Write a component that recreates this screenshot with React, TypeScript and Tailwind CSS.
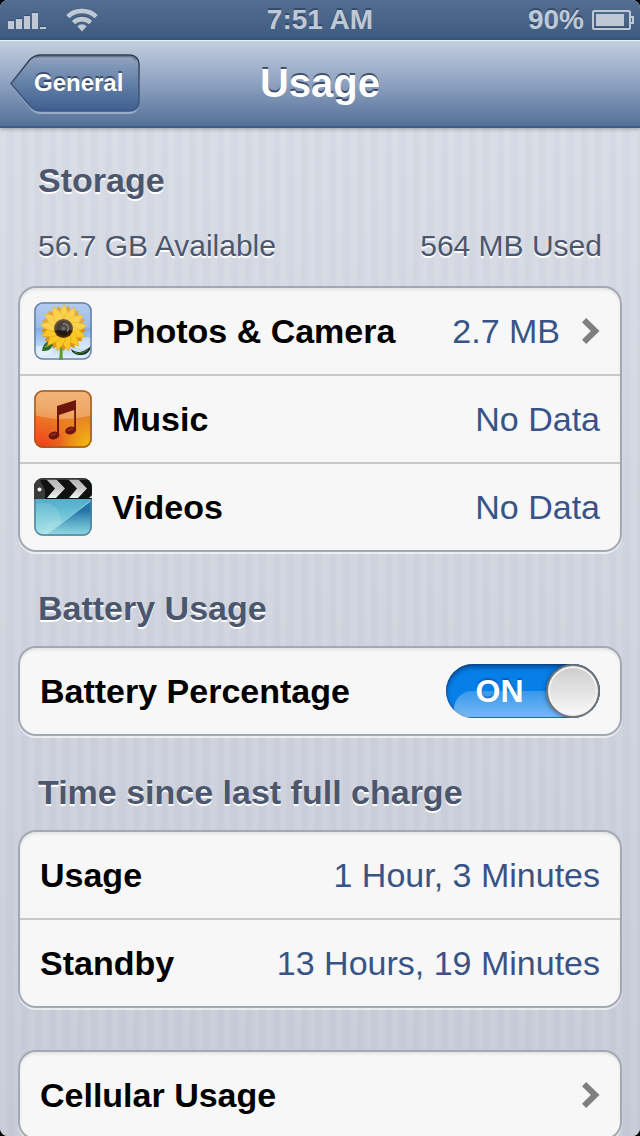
import { useId, useState, type ReactNode } from "react"

type StorageItem = { name: string; value: string; icon: ReactNode; href?: string }

const PETALS_BACK = Array.from({ length: 13 }, (_, i) => i * (360 / 13) + 12)
const PETALS_FRONT = Array.from({ length: 13 }, (_, i) => i * (360 / 13))

function SignalIcon() {
  return (
    <svg width="38" height="18" viewBox="0 0 38 18" aria-hidden="true">
      <path d="M0 9h6v2H0zM8 7h6v2H8zM16 4h6v2h-6zM24 1h6v2h-6zM32 15h6v2h-6z" fill="#2f4766" opacity=".7" />
      <path d="M0 10h6v8H0zM8 8h6v10H8zM16 5h6v13h-6zM24 2h6v16h-6zM32 16h6v2h-6z" fill="#bfc9d5" />
    </svg>
  )
}

function WifiIcon() {
  return (
    <svg width="32" height="24" viewBox="0 0 32 24" fill="none" aria-hidden="true">
      <g stroke="#2f4766" strokeWidth="4" opacity=".7" transform="translate(0 -1)">
        <path d="M1.8 8.6a20.5 20.5 0 0 1 28.4 0" />
        <path d="M7.4 14.2a12.4 12.4 0 0 1 17.2 0" />
      </g>
      <g stroke="#bfc9d5" strokeWidth="4.6">
        <path d="M1.8 8.6a20.5 20.5 0 0 1 28.4 0" />
        <path d="M7.4 14.6a12.4 12.4 0 0 1 17.2 0" />
      </g>
      <path d="M11.4 18.2a6.6 6.6 0 0 1 9.2 0L16 23.4z" fill="#bfc9d5" />
    </svg>
  )
}

function BatteryIcon() {
  return (
    <svg width="42" height="21" viewBox="0 0 42 21" fill="none" aria-hidden="true">
      <rect x="1" y="0" width="37" height="18" rx="1" stroke="#2f4766" strokeWidth="2" opacity=".6" />
      <rect x="1" y="1" width="37" height="18" rx="1" stroke="#bfc9d5" strokeWidth="2" />
      <rect x="4" y="4" width="28" height="12" fill="#bfc9d5" />
      <path d="M38 7h3v6h-3" stroke="#bfc9d5" strokeWidth="2" />
    </svg>
  )
}

function Chevron() {
  return (
    <svg width="18" height="26" viewBox="0 0 18 26" className="shrink-0" aria-hidden="true">
      <path d="M0 4.200 4.200 0 17.500 13 4.200 26 0 21.800 8.800 13z" fill="#7f7f7f" />
    </svg>
  )
}

function PhotosIcon() {
  return (
    <svg width="58" height="58" viewBox="0 0 58 58" aria-hidden="true">
      <defs>
        <linearGradient id="sky" x1="0" y1="0" x2="0" y2="1">
          <stop offset="0" stopColor="#a4c2ee" />
          <stop offset=".45" stopColor="#84ade6" />
          <stop offset=".75" stopColor="#b9d6f4" />
          <stop offset="1" stopColor="#e6f2fb" />
        </linearGradient>
        <radialGradient id="seeds">
          <stop offset="0" stopColor="#6a6058" />
          <stop offset=".35" stopColor="#1e1814" />
          <stop offset=".65" stopColor="#1e1712" />
          <stop offset="1" stopColor="#583408" />
        </radialGradient>
        <clipPath id="photosClip"><rect width="58" height="58" rx="9" /></clipPath>
      </defs>
      <g clipPath="url(#photosClip)">
        <rect width="58" height="58" fill="url(#sky)" />
        <ellipse cx="50" cy="41" rx="12" ry="6" fill="#fff" opacity=".4" />
        <ellipse cx="8" cy="49" rx="11" ry="5" fill="#fff" opacity=".4" />
        <path d="M25 40c1 7 1 12 0 18h4c-1-6 0-12 0-18z" fill="#5c9a2c" />
        <path d="M20 39c-6-1-11 2-12 10 6 0 9-1 10-5l3 2z" fill="#2d6b27" />
        <path d="M11 45c3-1 5-3 8-4" stroke="#8dbd58" strokeWidth="1.200" fill="none" />
        <path d="M37 47c5 4 11 5 20-3-1 6-5 9-10 9s-9-2-10-6z" fill="#12301a" />
        <path d="M40 50c5 2 9 1 14-2" stroke="#4f8c3c" strokeWidth="1" fill="none" />
        <g fill="#dc9410">
          {PETALS_BACK.map((deg) => (
            <path key={deg} d="M29.500 26c-7-6-6-14 .5-23 6.500 9 6 17-.5 23z" transform={`rotate(${deg} 29.5 26)`} />
          ))}
        </g>
        <g fill="#fbc926">
          {PETALS_FRONT.map((deg) => (
            <path key={deg} d="M29.500 26c-7-8-5-15 .5-23.500 5.500 8.500 6.500 15.500-.5 23.500z" stroke="#dd9a10" strokeWidth=".5" transform={`rotate(${deg} 29.5 26)`} />
          ))}
        </g>
        <circle cx="29.500" cy="26.500" r="9.500" fill="url(#seeds)" />
        <path d="M29 22c5-1 7 4 4 8" stroke="#a69c92" strokeWidth="1.500" fill="none" opacity=".6" />
        <path d="M0 0h58v25Q29 32 0 25z" fill="#fff" opacity=".18" />
      </g>
      <rect x="1" y="1" width="56" height="56" rx="8" fill="none" stroke="#6983a3" strokeWidth="1.500" />
    </svg>
  )
}

function MusicIcon() {
  return (
    <svg width="58" height="58" viewBox="0 0 58 58" aria-hidden="true">
      <defs>
        <linearGradient id="orange" x1="0" y1="0" x2="0" y2="1">
          <stop offset="0" stopColor="#ee9c50" />
          <stop offset=".5" stopColor="#e88428" />
          <stop offset="1" stopColor="#ea8a12" />
        </linearGradient>
        <radialGradient id="redGlow" cx=".12" cy="1" r=".75">
          <stop offset="0" stopColor="#ee3a1c" />
          <stop offset=".5" stopColor="#ec5a22" stopOpacity=".7" />
          <stop offset="1" stopColor="#ec7a20" stopOpacity="0" />
        </radialGradient>
        <radialGradient id="yellowGlow" cx=".95" cy=".95" r=".5">
          <stop offset="0" stopColor="#f2bc13" />
          <stop offset="1" stopColor="#f0a312" stopOpacity="0" />
        </radialGradient>
        <clipPath id="musicClip"><rect width="58" height="58" rx="9" /></clipPath>
      </defs>
      <g clipPath="url(#musicClip)">
        <rect width="58" height="58" fill="url(#orange)" />
        <rect width="58" height="58" fill="url(#redGlow)" />
        <rect width="58" height="58" fill="url(#yellowGlow)" />
        <path d="M0 0h58v25Q29 33 0 25z" fill="#fff" opacity=".25" />
        <g fill="#6f160c">
          <path d="M23 16 42 10v31h-1.800V20L25 25v21h-2z" />
          <ellipse cx="20" cy="45.500" rx="5.500" ry="3.800" transform="rotate(-12 20 45.500)" />
          <ellipse cx="36.700" cy="40.500" rx="5.500" ry="3.800" transform="rotate(-12 36.700 40.500)" />
        </g>
        <path d="M17 46c1-1.500 3-2.200 5-2M34 41c1-1.500 3-2.200 5-2" stroke="#b8472a" strokeWidth="1" fill="none" />
      </g>
      <rect x="1" y="1" width="56" height="56" rx="8" fill="none" stroke="#9c5f1e" strokeWidth="1.500" />
    </svg>
  )
}

function VideosIcon() {
  return (
    <svg width="58" height="58" viewBox="0 0 58 58" aria-hidden="true">
      <defs>
        <linearGradient id="screen" x1="0" y1="0" x2="0" y2="1">
          <stop offset="0" stopColor="#3f97bd" />
          <stop offset=".5" stopColor="#5db8d0" />
          <stop offset="1" stopColor="#a4e4e8" />
        </linearGradient>
        <linearGradient id="screenShade" x1="0" y1="0" x2="0" y2="1">
          <stop offset=".3" stopColor="#1868a0" stopOpacity=".85" />
          <stop offset="1" stopColor="#7fd0dc" stopOpacity=".5" />
        </linearGradient>
        <linearGradient id="stripe" x1="0" y1="0" x2="0" y2="1">
          <stop offset="0" stopColor="#b4b4b4" />
          <stop offset=".5" stopColor="#c8c8c8" />
          <stop offset="1" stopColor="#f4f4f4" />
        </linearGradient>
        <clipPath id="videosClip"><rect width="58" height="58" rx="9" /></clipPath>
      </defs>
      <g clipPath="url(#videosClip)">
        <rect width="58" height="58" fill="url(#screen)" />
        <circle cx="10" cy="42" r="17" fill="#fff" opacity=".12" />
        <circle cx="23" cy="56" r="14" fill="#fff" opacity=".08" />
        <path d="M58 22v36H10z" fill="url(#screenShade)" />
        <path d="M58 22 12 57" stroke="#c4eaf2" strokeWidth=".8" opacity=".8" />
        <rect width="58" height="21" fill="#111" />
        <path d="M0 0h5l6 12v9H0z" fill="#3a3a3a" />
        <g fill="url(#stripe)">
          <path d="M12 1h10l9 9.500-9 9.500h-9l8-9.500z" />
          <path d="M34 1h10l9 9.500-9 9.500h-9l8-9.500z" />
          <path d="M55 20l3-3v3z" />
        </g>
        <path d="M0 0h58v2H0z" fill="#444" opacity=".8" />
        <circle cx="5.500" cy="11.500" r="2" fill="#fff" />
      </g>
      <path d="M1 21v28a8 8 0 0 0 8 8h40a8 8 0 0 0 8-8V21" fill="none" stroke="#52839c" strokeWidth="1.500" />
    </svg>
  )
}

const STORAGE: StorageItem[] = [
  { name: "Photos & Camera", value: "2.7 MB", icon: <PhotosIcon />, href: "#photos" },
  { name: "Music", value: "No Data", icon: <MusicIcon /> },
  { name: "Videos", value: "No Data", icon: <VideosIcon /> },
]

const TIMES = [
  { name: "Usage", value: "1 Hour, 3 Minutes" },
  { name: "Standby", value: "13 Hours, 19 Minutes" },
]

function BackButton({ label }: { label: string }) {
  return (
    <button type="button" className="relative flex h-[60px] w-[130px] items-center pb-0.5 pl-6 text-2xl font-bold text-white [text-shadow:0_-2px_0_rgba(35,50,75,0.7)]">
      <svg width="130" height="60" viewBox="0 0 130 60" className="absolute inset-0" aria-hidden="true">
        <defs>
          <linearGradient id="back" x1="0" y1="0" x2="0" y2="1">
            <stop offset="0" stopColor="#93a5c0" />
            <stop offset=".5" stopColor="#6480a8" />
            <stop offset="1" stopColor="#3f5f90" />
          </linearGradient>
          <linearGradient id="backEdge" x1="0" y1="0" x2="0" y2="1">
            <stop offset="0" stopColor="#2e3a4c" />
            <stop offset=".5" stopColor="#3f526f" />
            <stop offset="1" stopColor="#3b5785" />
          </linearGradient>
        </defs>
        <path d="M1 31 20 6.500Q24.500 1 31 1H120a9 9 0 0 1 9 9V51a9 9 0 0 1-9 9H31q-6.500 0-11-5.500z" fill="#b9c9de" opacity=".6" />
        <path d="M1 29.500 20 5.500Q24.500 1 31 1H120a9 9 0 0 1 9 9V48a9 9 0 0 1-9 9H31q-6.500 0-11-5z" fill="url(#back)" stroke="url(#backEdge)" strokeWidth="1.500" />
        <path d="M25 3.500Q28 2.500 31 2.500H120a7 7 0 0 1 6 4" fill="none" stroke="#3a4759" strokeWidth="1.500" opacity=".5" />
      </svg>
      <span className="relative">{label}</span>
    </button>
  )
}

function Card({ children }: { children: ReactNode }) {
  return (
    <ul className="mx-[18px] overflow-hidden rounded-[18px] border-2 border-[#a3a9b4] bg-[#f7f7f7] shadow-[0_2px_0_rgba(255,255,255,0.6),inset_0_2px_3px_rgba(0,0,0,0.08)]">
      {children}
    </ul>
  )
}

function Row({ children, icon }: { children: ReactNode; icon?: boolean }) {
  return (
    <li className={`box-content flex h-[86px] items-center border-[#c8c8c8] pr-5 not-last:border-b-2 ${icon ? "pl-3.5" : "pl-5"}`}>
      {children}
    </li>
  )
}

function SectionTitle({ children }: { children: ReactNode }) {
  return (
    <h2 className="px-[38px] text-[34px]/10 font-bold text-[#4c566c] [text-shadow:0_2px_0_#fff]">{children}</h2>
  )
}

function Toggle({ id }: { id: string }) {
  const [on, setOn] = useState(true)
  return (
    <label
      className={`relative flex h-[54px] w-[154px] cursor-pointer items-center overflow-hidden rounded-full shadow-[inset_0_3px_5px_rgba(0,30,80,0.6),inset_0_0_0_1px_rgba(60,90,130,0.5)] ${
        on ? "justify-end bg-[#067fe8]" : "flex-row-reverse justify-end bg-[#eeeeee]"
      }`}
    >
      <input id={id} type="checkbox" role="switch" checked={on} onChange={(e) => setOn(e.target.checked)} className="sr-only" />
      {on && <span className="absolute top-[27px] right-2 left-2 h-[26px] rounded-tl-[18px] bg-linear-to-b from-white/20 to-white/45" />}
      <span className={`relative flex-1 pl-[7px] text-center text-[32px]/10 font-bold ${on ? "text-white [text-shadow:0_-2px_1px_rgba(0,50,120,0.4)]" : "text-[#7f7f7f]"}`}>
        {on ? "ON" : "OFF"}
      </span>
      <span className="relative size-[54px] rounded-full border-2 border-[#737373] bg-linear-to-b from-[#cccccc] to-[#fafafa] shadow-[0_0_4px_rgba(0,30,70,0.6),inset_0_0_0_2px_#f2f2f2]" />
    </label>
  )
}

export default function App() {
  const toggleId = useId()

  return (
    <div className="h-screen bg-black font-['Liberation_Sans',Arial,sans-serif]">
      <div className="flex h-full flex-col overflow-hidden rounded-lg bg-[#d0d4df]">
        <div className="grid h-10 shrink-0 grid-cols-[1fr_auto_1fr] items-center bg-linear-to-b from-[#536e90] to-[#3d5a80] text-[28px]/8 font-bold text-[#bfc9d5] [text-shadow:0_-2px_0_rgba(35,55,85,0.6)]">
          <div className="flex items-center gap-5 pl-2">
            <SignalIcon />
            <WifiIcon />
          </div>
          <time>7:51 AM</time>
          <div className="flex items-center justify-end gap-2 pr-[6px]">
            <span>90%</span>
            <BatteryIcon />
          </div>
        </div>

        <header className="relative grid h-[88px] shrink-0 grid-cols-[1fr_auto_1fr] items-center border-t border-b-2 border-t-[#e8eef4] border-b-[#3d5b87] bg-linear-to-b from-[#c2cfde] via-[#8ea1c0] to-[#557198] px-2.5 shadow-[0_1px_4px_rgba(0,0,0,0.3)]">
          <BackButton label="General" />
          <h1 className="pb-0.5 text-[40px]/12 font-bold text-white [text-shadow:0_-2px_0_rgba(35,50,75,0.75)]">Usage</h1>
        </header>

        <main className="min-h-0 flex-1 overflow-hidden bg-[repeating-linear-gradient(90deg,rgba(255,255,255,0.04)_0px,rgba(255,255,255,0.04)_7px,rgba(110,130,170,0.03)_7px,rgba(110,130,170,0.03)_14px),linear-gradient(#d8dce5,#c7cbd7)] pt-8">
          <SectionTitle>Storage</SectionTitle>
          <div className="mt-[26px] mb-5 flex justify-between px-[38px] text-[30px]/10 text-[#4c566c] [text-shadow:0_2px_0_#fff]">
            <span>56.7 GB Available</span>
            <span>564 MB Used</span>
          </div>
          <Card>
            {STORAGE.map((s) => (
              <Row key={s.name} icon>
                {s.icon}
                {s.href ? (
                  <a href={s.href} className="flex flex-1 items-center pl-5 text-[34px]/10">
                    <span className="flex-1 font-bold">{s.name}</span>
                    <span className="mr-[22px] text-[#385487]">{s.value}</span>
                    <Chevron />
                  </a>
                ) : (
                  <div className="flex flex-1 items-center justify-between pl-5 text-[34px]/10">
                    <span className="font-bold">{s.name}</span>
                    <span className="text-[#385487]">{s.value}</span>
                  </div>
                )}
              </Row>
            ))}
          </Card>

          <div className="mt-9 mb-[18px]">
            <SectionTitle>Battery Usage</SectionTitle>
          </div>
          <Card>
            <Row>
              <label htmlFor={toggleId} className="flex-1 text-[34px]/10 font-bold">Battery Percentage</label>
              <Toggle id={toggleId} />
            </Row>
          </Card>

          <div className="mt-9 mb-[18px]">
            <SectionTitle>Time since last full charge</SectionTitle>
          </div>
          <Card>
            {TIMES.map((t) => (
              <Row key={t.name}>
                <span className="flex-1 text-[34px]/10 font-bold">{t.name}</span>
                <span className="text-[34px]/10 text-[#385487]">{t.value}</span>
              </Row>
            ))}
          </Card>

          <div className="mt-[42px]">
            <Card>
              <Row>
                <a href="#cellular" className="flex flex-1 items-center justify-between text-[34px]/10 font-bold">
                  Cellular Usage
                  <Chevron />
                </a>
              </Row>
            </Card>
          </div>
        </main>
      </div>
    </div>
  )
}
